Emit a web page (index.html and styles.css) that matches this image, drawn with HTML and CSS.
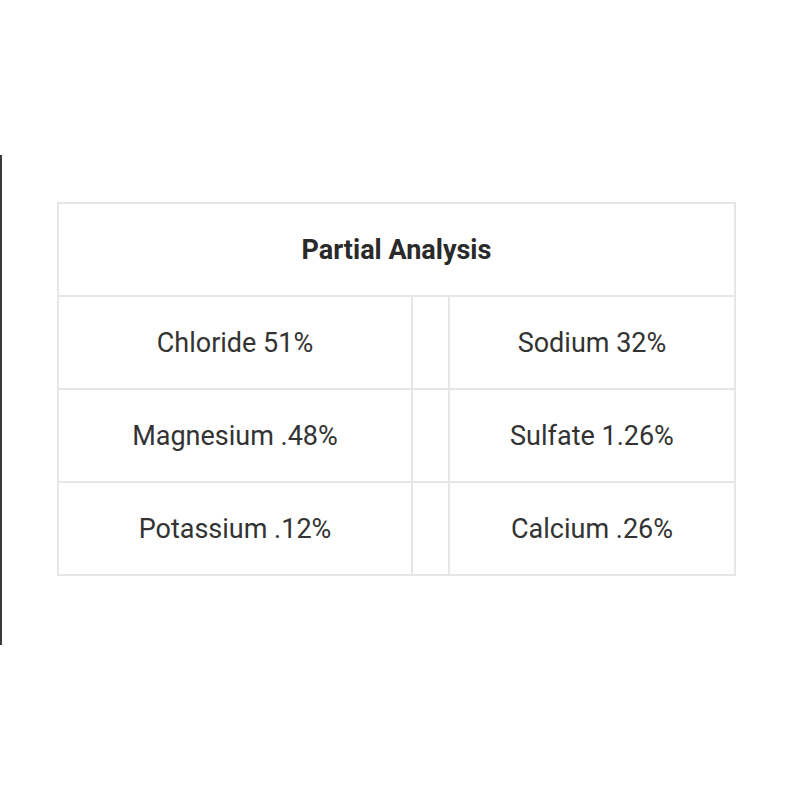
FILE: index.html
```html
<!DOCTYPE html>
<html>
<head>
<meta charset="utf-8">
<link rel="stylesheet" href="styles.css">
</head>
<body>
<div class="frame">
  <table class="analysis">
    <tr><th colspan="3">Partial Analysis</th></tr>
    <tr><td class="val">Chloride 51%</td><td class="gap"></td><td class="val">Sodium 32%</td></tr>
    <tr><td class="val">Magnesium .48%</td><td class="gap"></td><td class="val">Sulfate 1.26%</td></tr>
    <tr><td class="val">Potassium .12%</td><td class="gap"></td><td class="val">Calcium .26%</td></tr>
  </table>
</div>
</body>
</html>
```
FILE: styles.css
```css
html, body {
  margin: 0;
  padding: 0;
  background: #fff;
}
body {
  padding-top: 155px;
  font-family: Roboto, "Liberation Sans", sans-serif;
  color: #333;
}
.frame {
  border-left: 2px solid #3a3a3a;
  height: 490px;
  box-sizing: border-box;
  padding-top: 47px;
  padding-left: 55px;
}
.analysis {
  border-collapse: collapse;
  width: 679px;
}
.analysis th, .analysis td {
  border: 2px solid #e6e6e6;
  text-align: center;
  padding: 0;
  height: 91px;
}
.analysis th {
  font-size: 27px;
  font-weight: 700;
  color: #2a2a2a;
}
.analysis td {
  font-size: 27px;
  font-weight: 400;
}
.analysis td.val:first-child {
  width: 352px;
}
.analysis td.gap {
  width: 35px;
}
```
